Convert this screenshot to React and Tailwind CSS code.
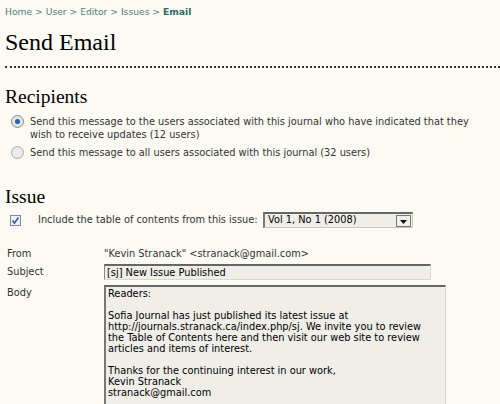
import React from 'react';

const sans = { fontFamily: '"DejaVu Sans", Verdana, sans-serif' };
const serif = { fontFamily: '"Liberation Serif", Georgia, serif' };

function App() {
    return (
        <div className="w-[500px] h-[404px] overflow-hidden bg-[#fbfaf3] pl-[5px] text-[#222]" style={sans}>
            <div className="pt-[6px] h-[18px] text-[9.2px] leading-[12px] text-[#4e7f7b]">
                Home &gt; User &gt; Editor &gt; Issues &gt; <span className="font-bold text-[#2f6b66]">Email</span>
            </div>
            <h1 className="mt-[11px] h-[26px] text-[24px] leading-[26px] text-black" style={serif}>
                Send Email
            </h1>
            <div className="mt-[11px] border-b-2 border-dotted border-[#333]" />

            <h2 className="mt-[18px] h-[22px] text-[19.5px] leading-[22px] text-black" style={serif}>
                Recipients
            </h2>
            <div className="mt-[7px] text-[9.8px] leading-[13px] text-[#333]">
                <label className="flex items-start">
                    <span className="ml-[6px] w-[13px] h-[13px] rounded-full border border-[#8a8a8a] bg-[#e6e6e6] flex items-center justify-center shrink-0">
                        <span className="w-[5px] h-[5px] rounded-full bg-[#1d64b8]" />
                    </span>
                    <span className="ml-[6px] w-[440px]">
                        Send this message to the users associated with this journal who have indicated that they wish to receive updates (12 users)
                    </span>
                </label>
                <label className="flex items-start mt-[5px]">
                    <span className="ml-[6px] w-[13px] h-[13px] rounded-full border border-[#aaa] bg-[#ececec] shrink-0" />
                    <span className="ml-[6px]">Send this message to all users associated with this journal (32 users)</span>
                </label>
            </div>

            <h2 className="mt-[27px] h-[22px] text-[19.5px] leading-[22px] text-black" style={serif}>
                Issue
            </h2>
            <div className="mt-[4px] h-[16px] flex items-center text-[9.8px] text-[#333]">
                <span className="ml-[5px] w-[11px] h-[11px] border border-[#7a8aa8] bg-[#eef0f6] flex items-center justify-center">
                    <svg width="9" height="9" viewBox="0 0 9 9">
                        <path d="M1.5 4.5 L3.5 7 L7.5 1.5" fill="none" stroke="#2a4fa0" strokeWidth="1.4" />
                    </svg>
                </span>
                <span className="ml-[17px]">Include the table of contents from this issue:</span>
                <div className="ml-auto mr-[87px] w-[150px] h-[16px] flex items-center bg-[#efeee8] border border-[#c8c8c0] border-t-2 border-t-[#666] border-l-2 border-l-[#777]">
                    <span className="flex-1 pl-[3px] text-[9.8px] text-black">Vol 1, No 1 (2008)</span>
                    <span className="w-[15px] h-[12px] mr-[1px] border border-[#777] bg-[#f1f0ea] flex items-end justify-center pb-[2px]">
                        <svg width="7" height="4" viewBox="0 0 7 4"><path d="M0 0 H7 L3.5 4 Z" fill="#111" /></svg>
                    </span>
                </div>
            </div>

            <div className="mt-[19px] text-[9.8px] text-[#333]">
                <div className="flex h-[14px] items-center">
                    <span className="w-[99px] pl-[2px]">From</span>
                    <span>"Kevin Stranack" &lt;stranack@gmail.com&gt;</span>
                </div>
                <div className="flex mt-[3px]">
                    <span className="w-[99px] pl-[2px] pt-[1px]">Subject</span>
                    <div className="w-[327px] h-[16px] bg-[#efeee8] border border-[#d8d8d0] border-t-2 border-t-[#666] border-l-[#888] pl-[2px] text-black leading-[13px]">
                        [sj] New Issue Published
                    </div>
                </div>
                <div className="flex mt-[5px]">
                    <span className="w-[99px] pl-[2px] pt-[1px]">Body</span>
                    <div className="w-[342px] h-[130px] bg-[#efeee8] border border-[#d8d8d0] border-t-2 border-t-[#666] border-l-2 border-l-[#777] pl-[2px] pt-[1px] text-black leading-[11px]">
                        Readers:<br /><br />
                        Sofia Journal has just published its latest issue at<br />
                        http://journals.stranack.ca/index.php/sj. We invite you to review<br />
                        the Table of Contents here and then visit our web site to review<br />
                        articles and items of interest.<br /><br />
                        Thanks for the continuing interest in our work,<br />
                        Kevin Stranack<br />
                        stranack@gmail.com
                    </div>
                </div>
            </div>
        </div>
    );
}

export default App;
